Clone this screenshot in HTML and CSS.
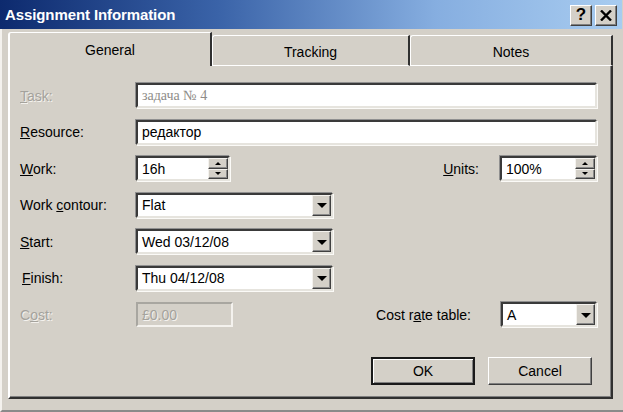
FILE: index.html
```html
<!DOCTYPE html>
<html lang="en">
<head>
    <meta charset="UTF-8">
    <title>Assignment Information</title>
    <link rel="stylesheet" href="styles.css">
</head>
<body>

    <div class="window">
        <div class="titlebar">
            <span class="title">Assignment Information</span>
            <div class="caption-btns">
                <span class="cap-btn help">?</span>
                <span class="cap-btn">
                    <svg width="12" height="11" viewBox="0 0 12 11"><path d="M1 0.5 L11 10.5 M11 0.5 L1 10.5" stroke="#000" stroke-width="2.4"/></svg>
                </span>
            </div>
        </div>

        <div class="tabs">
            <div class="tab active">General</div>
            <div class="tab">Tracking</div>
            <div class="tab last">Notes</div>
        </div>

        <div class="panel">
            <div class="row">
                <span class="lbl disabled"><u>T</u>ask:</span>
                <div class="field grow"><span class="value serif">задача № 4</span></div>
            </div>

            <div class="row">
                <span class="lbl"><u>R</u>esource:</span>
                <div class="field grow"><span class="value">редактор</span></div>
            </div>

            <div class="row">
                <span class="lbl"><u>W</u>ork:</span>
                <div class="field work">
                    <span class="value">16h</span>
                    <div class="spin">
                        <span class="spin-btn"><i class="arrow up"></i></span>
                        <span class="spin-btn"><i class="arrow down"></i></span>
                    </div>
                </div>
                <span class="lbl-right units-lbl"><u>U</u>nits:</span>
                <div class="field units">
                    <span class="value">100%</span>
                    <div class="spin">
                        <span class="spin-btn"><i class="arrow up"></i></span>
                        <span class="spin-btn"><i class="arrow down"></i></span>
                    </div>
                </div>
            </div>

            <div class="row">
                <span class="lbl">Work <u>c</u>ontour:</span>
                <div class="field combo">
                    <span class="value">Flat</span>
                    <span class="drop-btn"><i class="arrow down big"></i></span>
                </div>
            </div>

            <div class="row">
                <span class="lbl"><u>S</u>tart:</span>
                <div class="field combo">
                    <span class="value">Wed 03/12/08</span>
                    <span class="drop-btn"><i class="arrow down big"></i></span>
                </div>
            </div>

            <div class="row">
                <span class="lbl finish"><u>F</u>inish:</span>
                <div class="field combo">
                    <span class="value">Thu 04/12/08</span>
                    <span class="drop-btn"><i class="arrow down big"></i></span>
                </div>
            </div>

            <div class="row">
                <span class="lbl disabled">C<u>o</u>st:</span>
                <div class="field cost"><span class="value">£0.00</span></div>
                <span class="lbl-right rate-lbl">Cost r<u>a</u>te table:</span>
                <div class="field rate">
                    <span class="value">A</span>
                    <span class="drop-btn"><i class="arrow down big"></i></span>
                </div>
            </div>

            <div class="buttons">
                <button class="btn default">OK</button>
                <button class="btn">Cancel</button>
            </div>
        </div>
    </div>

</body>
</html>
```

FILE: styles.css
```css
body {
    margin: 0;
    width: 623px;
    height: 412px;
    overflow: hidden;
    background-color: #d4d0c8;
    font-family: 'Liberation Sans', Arial, sans-serif;
    font-size: 14px;
    color: #000;
}

.window {
    width: 623px;
    height: 412px;
    box-sizing: border-box;
    background-color: #d4d0c8;
    border-bottom: 2px solid #8a8a8a;
    border-left: 2px solid #f4f2ee;
}

/* title bar */
.titlebar {
    box-sizing: border-box;
    height: 29px;
    width: 622px;
    margin-left: -2px;
    display: flex;
    align-items: center;
    justify-content: space-between;
    padding: 0 5px 0 5px;
    background: linear-gradient(to right, #0d2a6e 0%, #3a63a8 35%, #86aee0 70%, #a8ccf0 100%);
}

.title {
    color: #fff;
    font-weight: bold;
    font-size: 15px;
    letter-spacing: -0.1px;
}

.caption-btns {
    display: flex;
    gap: 3px;
    margin-top: 1px;
}

.cap-btn {
    width: 20px;
    height: 19px;
    display: flex;
    align-items: center;
    justify-content: center;
    background-color: #d4d0c8;
    border: 1px solid;
    border-color: #fff #404040 #404040 #fff;
    box-shadow: inset -1px -1px #808080;
    font-weight: bold;
    font-size: 17px;
}

/* tabs */
.tabs {
    display: flex;
    align-items: flex-end;
    height: 34px;
    margin-top: 3px;
    margin-left: 6px;
    width: 605px;
}

.tab {
    box-sizing: border-box;
    height: 31px;
    display: flex;
    align-items: center;
    justify-content: center;
    padding-top: 2px;
    border-top: 1px solid #fff;
    border-left: 1px solid #fff;
    border-right: 2px solid #303030;
    border-bottom: 1px solid #fff;
    border-top-left-radius: 3px;
    width: 198px;
}

.tab.active {
    width: 204px;
    height: 34px;
    border-bottom: none;
    border-left: 2px solid #fff;
    padding-top: 0;
}

.tab.last {
    width: 203px;
}

/* panel */
.panel {
    box-sizing: border-box;
    margin-left: 6px;
    width: 605px;
    height: 333px;
    border-left: 2px solid #fff;
    border-right: 2px solid #303030;
    border-bottom: 2px solid #303030;
    box-shadow: inset -1px -1px #808080;
    padding: 17px 14px 0 10px;
    display: flex;
    flex-direction: column;
    gap: 11.5px;
}

.row {
    display: flex;
    align-items: center;
    height: 25px;
}

.lbl {
    width: 116px;
    flex-shrink: 0;
}

.lbl.finish {
    padding-left: 2px;
    width: 114px;
}

.disabled {
    color: #a4a29c;
    text-shadow: 1px 1px 0 #f4f2ee;
}

.lbl-right {
    margin-left: auto;
}

.units-lbl {
    margin-right: 21px;
}

.rate-lbl {
    margin-right: 30px;
}

/* sunken fields */
.field {
    box-sizing: border-box;
    height: 25px;
    display: flex;
    align-items: center;
    background-color: #fff;
    border: 2px solid;
    border-color: #3a3a3a #e6e4de #e6e4de #3a3a3a;
    box-shadow: -1px -1px 0 #909090, 1px 1px 0 #fbfaf7;
}

.value {
    flex: 1;
    padding-left: 4px;
    white-space: nowrap;
}

.grow {
    flex: 1;
}

.serif {
    font-family: 'Liberation Serif', 'Times New Roman', serif;
    color: #8e8c88;
}

.work {
    width: 94px;
}

.units {
    width: 97px;
}

.combo {
    width: 197px;
}

.cost {
    width: 97px;
    background-color: #d4d0c8;
    border-color: #a8a6a0 #f4f2ee #f4f2ee #a8a6a0;
    box-shadow: none;
    color: #a4a29c;
    text-shadow: 1px 1px 0 #f4f2ee;
}

.rate {
    width: 96px;
}

/* spinner and drop buttons */
.spin {
    width: 20px;
    height: 21px;
    display: flex;
    flex-direction: column;
}

.spin-btn,
.drop-btn {
    box-sizing: border-box;
    display: flex;
    align-items: center;
    justify-content: center;
    background-color: #d4d0c8;
    border: 1px solid;
    border-color: #f4f2ee #404040 #404040 #f4f2ee;
    box-shadow: inset -1px -1px #8a8a8a;
}

.spin-btn {
    height: 10.5px;
}

.drop-btn {
    width: 19px;
    height: 21px;
}

.arrow {
    width: 0;
    height: 0;
    border-left: 3px solid transparent;
    border-right: 3px solid transparent;
}

.arrow.up {
    border-bottom: 3px solid #000;
}

.arrow.down {
    border-top: 3px solid #000;
}

.arrow.big {
    border-left-width: 5px;
    border-right-width: 5px;
    border-top-width: 5px;
    margin-top: 1px;
}

/* dialog buttons */
.buttons {
    display: flex;
    justify-content: flex-end;
    gap: 13px;
    margin-top: 18.5px;
    padding-right: 5px;
}

.btn {
    box-sizing: border-box;
    width: 104px;
    height: 28px;
    font-family: 'Liberation Sans', Arial, sans-serif;
    font-size: 14px;
    color: #000;
    background-color: #d4d0c8;
    border: 1px solid;
    border-color: #fff #404040 #404040 #fff;
    box-shadow: inset -1px -1px #808080;
    padding: 0;
}

.btn.default {
    border: 2px solid #1a1a1a;
    box-shadow: inset 1px 1px #fff, inset -1px -1px #808080;
}
```
